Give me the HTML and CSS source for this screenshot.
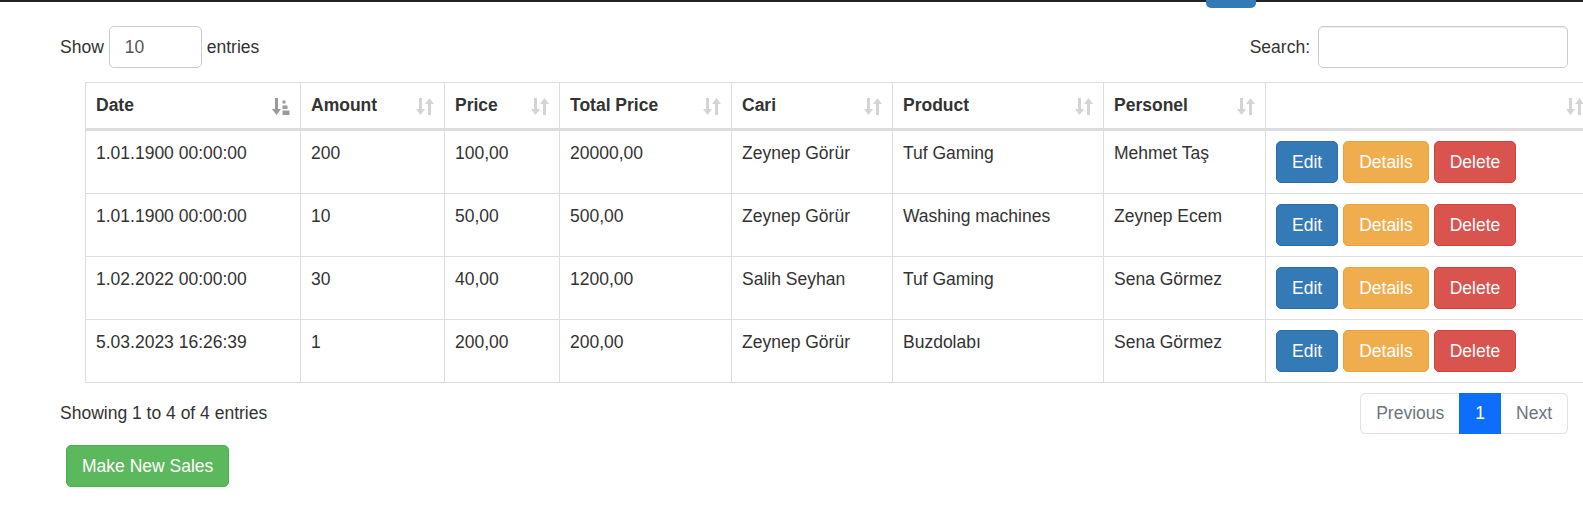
FILE: index.html
```html
<!DOCTYPE html>
<html lang="tr">
<head>
<meta charset="utf-8">
<title>Sales</title>
<link rel="stylesheet" href="styles.css">
</head>
<body>
<div class="topbar"><span class="topbar-tab"></span></div>
<div class="page">
  <div class="toolbar">
    <label class="length">Show <select class="len-select"><option>10</option></select> entries</label>
    <label class="search">Search: <input class="search-input" type="search"></label>
  </div>

  <table class="data-table">
    <colgroup>
      <col class="c-date"><col class="c-amount"><col class="c-price"><col class="c-total"><col class="c-cari"><col class="c-product"><col class="c-personel"><col class="c-actions">
    </colgroup>
    <thead>
      <tr>
        <th>Date<svg class="sort sort-active" viewBox="0 0 18 17"><path d="M3 0h3v11h3l-4.5 6L0 11h3z"/><path d="M10.5 2.5h3v3h-3zM10.5 7.5h5v3.5h-5zM10.5 12.5h7v4.5h-7z"/></svg></th>
        <th>Amount<svg class="sort" viewBox="0 0 18 17"><path d="M3 0h3v11h3l-4.5 6L0 11h3z"/><path d="M12 17h3V6h3l-4.5-6L9 6h3z"/></svg></th>
        <th>Price<svg class="sort" viewBox="0 0 18 17"><path d="M3 0h3v11h3l-4.5 6L0 11h3z"/><path d="M12 17h3V6h3l-4.5-6L9 6h3z"/></svg></th>
        <th>Total Price<svg class="sort" viewBox="0 0 18 17"><path d="M3 0h3v11h3l-4.5 6L0 11h3z"/><path d="M12 17h3V6h3l-4.5-6L9 6h3z"/></svg></th>
        <th>Cari<svg class="sort" viewBox="0 0 18 17"><path d="M3 0h3v11h3l-4.5 6L0 11h3z"/><path d="M12 17h3V6h3l-4.5-6L9 6h3z"/></svg></th>
        <th>Product<svg class="sort" viewBox="0 0 18 17"><path d="M3 0h3v11h3l-4.5 6L0 11h3z"/><path d="M12 17h3V6h3l-4.5-6L9 6h3z"/></svg></th>
        <th>Personel<svg class="sort" viewBox="0 0 18 17"><path d="M3 0h3v11h3l-4.5 6L0 11h3z"/><path d="M12 17h3V6h3l-4.5-6L9 6h3z"/></svg></th>
        <th class="th-actions"><svg class="sort sort-edge" viewBox="0 0 18 17"><path d="M3 0h3v11h3l-4.5 6L0 11h3z"/><path d="M12 17h3V6h3l-4.5-6L9 6h3z"/></svg></th>
      </tr>
    </thead>
    <tbody>
      <tr>
        <td>1.01.1900 00:00:00</td><td>200</td><td>100,00</td><td>20000,00</td><td>Zeynep Görür</td><td>Tuf Gaming</td><td>Mehmet Taş</td>
        <td><div class="actions"><a class="btn btn-primary">Edit</a><a class="btn btn-warning">Details</a><a class="btn btn-danger">Delete</a></div></td>
      </tr>
      <tr>
        <td>1.01.1900 00:00:00</td><td>10</td><td>50,00</td><td>500,00</td><td>Zeynep Görür</td><td>Washing machines</td><td>Zeynep Ecem</td>
        <td><div class="actions"><a class="btn btn-primary">Edit</a><a class="btn btn-warning">Details</a><a class="btn btn-danger">Delete</a></div></td>
      </tr>
      <tr>
        <td>1.02.2022 00:00:00</td><td>30</td><td>40,00</td><td>1200,00</td><td>Salih Seyhan</td><td>Tuf Gaming</td><td>Sena Görmez</td>
        <td><div class="actions"><a class="btn btn-primary">Edit</a><a class="btn btn-warning">Details</a><a class="btn btn-danger">Delete</a></div></td>
      </tr>
      <tr>
        <td>5.03.2023 16:26:39</td><td>1</td><td>200,00</td><td>200,00</td><td>Zeynep Görür</td><td>Buzdolabı</td><td>Sena Görmez</td>
        <td><div class="actions"><a class="btn btn-primary">Edit</a><a class="btn btn-warning">Details</a><a class="btn btn-danger">Delete</a></div></td>
      </tr>
    </tbody>
  </table>

  <div class="footer-row">
    <div class="info">Showing 1 to 4 of 4 entries</div>
    <ul class="pagination">
      <li class="page-item disabled"><a class="page-link">Previous</a></li>
      <li class="page-item active"><a class="page-link">1</a></li>
      <li class="page-item disabled"><a class="page-link">Next</a></li>
    </ul>
  </div>

  <a class="btn btn-success btn-new">Make New Sales</a>
</div>
</body>
</html>
```
FILE: styles.css
```css
* { box-sizing: border-box; }

html, body {
  margin: 0;
  padding: 0;
  background: #fff;
}

body {
  font-family: "Liberation Sans", Arial, Helvetica, sans-serif;
  font-size: 17.5px;
  line-height: 25px;
  color: #333;
  overflow: hidden;
}

.topbar {
  position: relative;
  height: 2px;
  background: #222;
}

.topbar-tab {
  position: absolute;
  left: 1206px;
  top: 0;
  width: 50px;
  height: 8px;
  background: #337ab7;
  border-radius: 0 0 5px 5px;
}

.page {
  padding: 24px 15px 0 60px;
  overflow: hidden;
  height: 515px;
}

.toolbar {
  display: flex;
  justify-content: space-between;
  align-items: center;
  height: 42px;
}

.length, .search {
  display: flex;
  align-items: center;
  font-weight: normal;
}

.len-select {
  -webkit-appearance: none;
  appearance: none;
  width: 93px;
  height: 42px;
  margin: 0 5px;
  padding: 0 15px;
  font-family: inherit;
  font-size: 17.5px;
  color: #555;
  background: #fff;
  border: 1px solid #ccc;
  border-radius: 5px;
}

.search-input {
  width: 250px;
  height: 42px;
  margin-left: 8px;
  padding: 0 15px;
  font-family: inherit;
  font-size: 17.5px;
  border: 1px solid #ccc;
  border-radius: 5px;
  box-shadow: inset 0 1px 1px rgba(0,0,0,0.075);
}

.data-table {
  margin: 14px 0 0 25px;
  width: 1515px;
  table-layout: fixed;
  border-collapse: collapse;
  border-spacing: 0;
}

.c-date { width: 215px; }
.c-amount { width: 144px; }
.c-price { width: 115px; }
.c-total { width: 172px; }
.c-cari { width: 161px; }
.c-product { width: 211px; }
.c-personel { width: 162px; }
.c-actions { width: 335px; }

.data-table th,
.data-table td {
  border: 1px solid #ddd;
  padding: 10px;
  text-align: left;
  vertical-align: top;
  white-space: nowrap;
}

.data-table th {
  position: relative;
  font-weight: bold;
  padding-right: 37px;
  border-bottom: 3px solid #ddd;
  vertical-align: bottom;
}

.sort {
  position: absolute;
  right: 10px;
  top: 15px;
  width: 18px;
  height: 17px;
  fill: #d4d4d4;
}

.sort-active { fill: #9a9a9a; }

.sort-edge { right: 16px; }

.actions {
  display: flex;
  gap: 5px;
}

.btn {
  display: inline-block;
  height: 42px;
  padding: 7.5px 15px;
  font-size: 17.5px;
  line-height: 25px;
  border: 1px solid transparent;
  border-radius: 5px;
  color: #fff;
  text-decoration: none;
  white-space: nowrap;
}

.btn-primary { background: #337ab7; border-color: #2e6da4; }
.btn-warning { background: #f0ad4e; border-color: #eea236; }
.btn-danger { background: #d9534f; border-color: #d43f3a; }
.btn-success { background: #5cb85c; border-color: #4cae4c; }

.footer-row {
  display: flex;
  justify-content: space-between;
  align-items: center;
  margin-top: 10px;
  height: 41px;
}

.info {
  line-height: 25px;
}

.pagination {
  display: flex;
  margin: 0;
  padding: 0;
  list-style: none;
}

.page-link {
  display: block;
  height: 41px;
  padding: 7px 15px;
  line-height: 25px;
  color: #6c757d;
  background: #fff;
  border: 1px solid #dee2e6;
  margin-left: -1px;
  text-decoration: none;
}

.page-item:first-child .page-link {
  margin-left: 0;
  border-radius: 5px 0 0 5px;
}

.page-item:last-child .page-link {
  border-radius: 0 5px 5px 0;
}

.page-item.active .page-link {
  position: relative;
  color: #fff;
  background: #0d6efd;
  border-color: #0d6efd;
}

.btn-new {
  margin: 11px 0 0 6px;
}
```
